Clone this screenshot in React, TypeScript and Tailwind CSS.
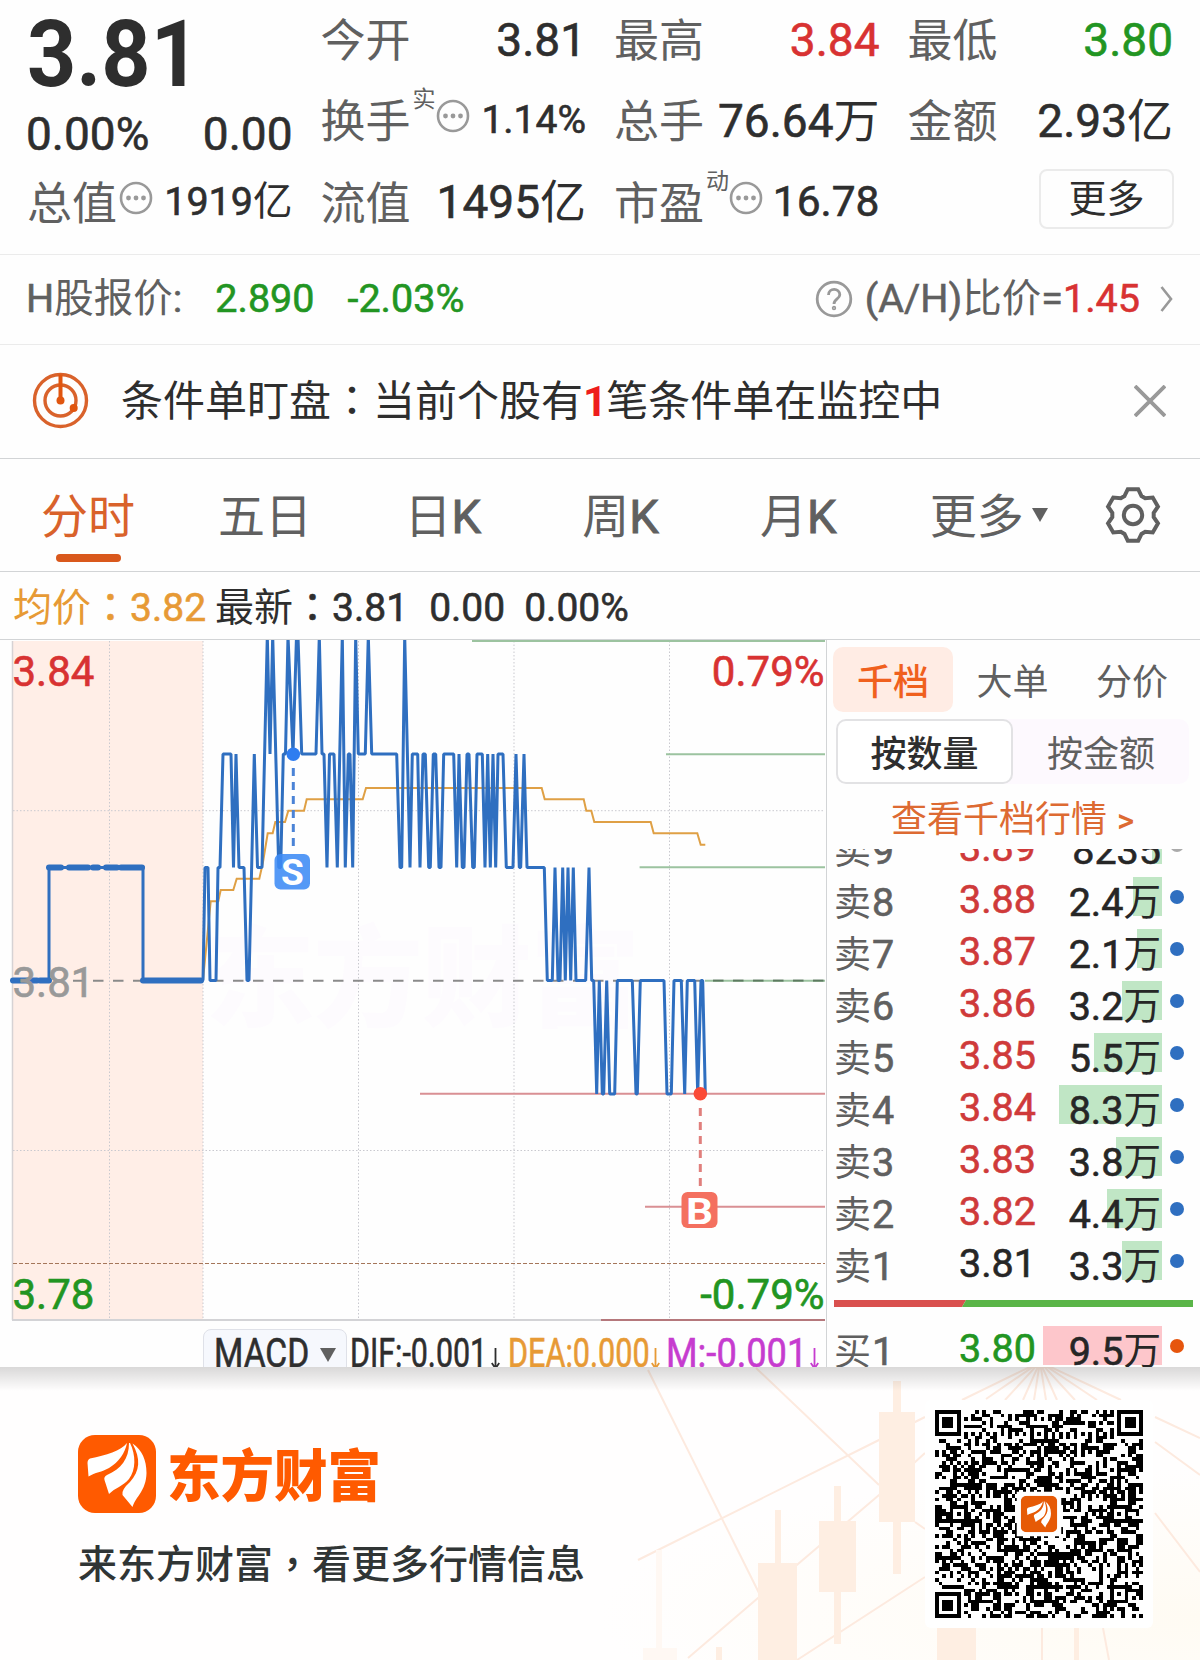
import type { ReactNode } from 'react';

const BLUE = '#2f6fc0';

// price level -> y inside the chart (chart top is 0)
const LEVEL = { T: -4, A: 114, B: 227.5, C: 340.5, D: 454 };

// intraday ticks: x followed by level
const ticks =
  '203C 205B 208B 210C 216C 218B 220B 223A 231A 233.5B 236A 239B 244B 247C 249C 254.3A 257.5B 262B 267.3T 270A 272.7T 278.7B 280.7B 283.3A 285.5A 288T 293A 296.5T 298T 301.7A 316A 319.3T 322A 324A 327B 329.5A 334A 337.3B 342.3T 345.3B 348.3A 350A 352.7B 355.7T 358.3A 365.3A 368.3T 371.7A 396.7A 400B 401.7B 404.7T 410B 412.3A 417.7A 420B 423A 425.3A 428.7B 430.3B 433.3A 435.7A 439B 441B 443.7A 453.7A 456.7B 459A 462.3B 464B 467A 469A 472.7B 474.3B 477A 482.3A 485B 487.7A 490.3B 493A 495.7B 498A 503A 506.3B 513B 516A 519.3B 520.7B 524A 527B 544.3B 547.3C 552.3C 555B 558C 560C 562.7B 565.3C 568B 570.7C 573.3B 576C 585.7C 589B 591.7C 593.7C 596.7D 599.3C 602.3D 603.7D 606.7C 609.7D 614.7D 617.3C 632.3C 636D 637.3D 640.3C 664C 667D 671.3D 674C 681.3C 684.7D 687.3C 694.7C 697.7D 701C 702.7C 705.3D'.split(' ');

const tickPoints = ticks
  .map((t) => `${t.slice(0, -1)},${LEVEL[t.slice(-1) as keyof typeof LEVEL]}`)
  .join(' ');

const avgPoints =
  '203,340 210.7,261.3 218.3,261.3 220.7,250 233.3,250 236.7,238.7 259.3,238.7 263,222 267.7,193.3 272.7,193.3 275.3,182 285,182 288.3,170.7 304,170.7 306.7,159.3 362.7,159.3 366,148 541.7,148 544.7,159.3 583.7,159.3 586.3,170.7 591.3,170.7 594.3,182 650.7,182 653.7,193.3 697.3,193.3 700.7,204.7 705.3,204.7';

const gearPoints = [0, 60, 120, 180, 240, 300]
  .flatMap((deg) => {
    const a = (deg * Math.PI) / 180;
    return [[-8.5, -19], [-5.2, -25.8], [5.2, -25.8], [8.5, -19]].map(
      ([x, y]) => `${(x * Math.cos(a) - y * Math.sin(a)).toFixed(2)},${(x * Math.sin(a) + y * Math.cos(a)).toFixed(2)}`,
    );
  })
  .join(' ');

const orders = [
  { label: '卖9', price: '3.89', qty: '8235', bar: 10, dot: 'bg-[#aaaaaa]' },
  { label: '卖8', price: '3.88', qty: '2.4万', bar: 29 },
  { label: '卖7', price: '3.87', qty: '2.1万', bar: 25 },
  { label: '卖6', price: '3.86', qty: '3.2万', bar: 40 },
  { label: '卖5', price: '3.85', qty: '5.5万', bar: 68 },
  { label: '卖4', price: '3.84', qty: '8.3万', bar: 103 },
  { label: '卖3', price: '3.83', qty: '3.8万', bar: 46 },
  { label: '卖2', price: '3.82', qty: '4.4万', bar: 55 },
  { label: '卖1', price: '3.81', qty: '3.3万', bar: 40, color: 'text-[#262626]' },
];

// QR version 10: 57 modules a side
const SIZE = 57;
const isDark = (x: number, y: number, noise: number) => {
  const finders = [[3, 3], [SIZE - 4, 3], [3, SIZE - 4]];
  for (const [cx, cy] of finders) {
    const d = Math.max(Math.abs(x - cx), Math.abs(y - cy));
    if (d <= 4) return d === 3 || d <= 1;
  }
  const aligns = [[6, 28], [28, 6], [28, 50], [50, 28], [50, 50]];
  for (const [cx, cy] of aligns) {
    const d = Math.max(Math.abs(x - cx), Math.abs(y - cy));
    if (d <= 2) return d !== 1;
  }
  if (x === 6 || y === 6) return (x + y) % 2 === 0;
  return noise > 0.5;
};

let seed = 20231;
let qrPath = '';
for (let y = 0; y < SIZE; y++) {
  for (let x = 0; x < SIZE; x++) {
    seed = (seed * 1103515245 + 12345) % 2147483648;
    if (isDark(x, y, seed / 2147483648)) qrPath += `M${x} ${y}h1v1h-1z`;
  }
}

// latin and digits carry the thin outline, Chinese runs do not
const Mixed = ({ children }: { children: string }) => (
  <>
    {children.split(/([\u4e00-\u9fff]+|：|，)/).filter(Boolean).map((part, i) => {
      if (part === '：' || part === '，') return <span key={i} className="font-['Noto_Sans_CJK_TC']">{part}</span>;
      return /[\u4e00-\u9fff]/.test(part) ? <span key={i} className="[-webkit-text-stroke:0]">{part}</span> : part;
    })}
  </>
);

const Feathers = () => (
  <g fill="#fff">
    <path d="M49 8C43 16 28 20 12 23.5Q9.5 24.5 9.5 28L10.5 41.5C17 37.5 24 37 31 33C41 27 47 18 49 8Z" />
    <path d="M51 8C51 24 43 34 29 40Q25.5 42 26.5 45L31 59C37 53 45 51 51 44C58 35 58 20 52 8Z" />
    <path d="M54.5 8.5C63 24 62 36 52 47Q43 55 44.5 60L54.5 72C58 61 68 56 68.5 38C68.5 25 64 15 54.5 8.5Z" />
  </g>
);

const Dots = () => (
  <svg className="w-[34px] h-[34px] shrink-0" viewBox="-17 -17 34 34" fill="#999">
    <circle r="15" fill="none" stroke="#999" strokeWidth="2.6" />
    <circle cx="-7.5" r="2.4" />
    <circle r="2.4" />
    <circle cx="7.5" r="2.4" />
  </svg>
);

type StatProps = { label: string; children: string; sup?: string; dots?: boolean; value?: string };

const Stat = ({ label, children, sup, dots, value = 'text-[46px] text-[#2e2e2e]' }: StatProps) => (
  <div className="flex items-center justify-between h-full whitespace-nowrap">
    <div className="flex items-center [-webkit-text-stroke:0]">
      <span className="text-[45px] text-[#606060] translate-y-[2px]">{label}</span>
      {sup && <span className="text-[23px] text-[#606060] ml-[2px] -mt-[42px]">{sup}</span>}
      {dots && <div className={sup ? '-mt-[9px]' : '-mt-[9px] ml-[2px]'}><Dots /></div>}
    </div>
    <span className={value}><Mixed>{children}</Mixed></span>
  </div>
);

const Row = ({ h, children }: { h: string; children: ReactNode }) => <div className={h}>{children}</div>;

const Quote = () => (
  <section className="grid grid-cols-4 gap-x-[28px] h-[255px] px-[27px] border-b border-[#ebebeb]">
    <div>
      <div className="h-[105px] flex items-center pt-[3px]">
        <span className="text-[93px] font-bold text-[#2e2e2e] origin-left scale-x-[0.925] [-webkit-text-stroke:0]">3.81</span>
      </div>
      <div className="h-[57px] flex items-center justify-between text-[46px] text-[#2e2e2e]">
        <span className="-ml-[1px]">0.00%</span>
        <span>0.00</span>
      </div>
      <Row h="h-[81px]">
        <Stat label="总值" dots value="text-[39.5px] text-[#2e2e2e] -mt-[2px]">1919亿</Stat>
      </Row>
    </div>
    <div>
      <Row h="h-[79px]"><Stat label="今开">3.81</Stat></Row>
      <Row h="h-[83px]">
        <Stat label="换手" sup="实" dots value="text-[39px] text-[#2e2e2e]">1.14%</Stat>
      </Row>
      <Row h="h-[80px]"><Stat label="流值">1495亿</Stat></Row>
    </div>
    <div>
      <Row h="h-[79px]"><Stat label="最高" value="text-[46px] text-[#d83232]">3.84</Stat></Row>
      <Row h="h-[83px]"><Stat label="总手">76.64万</Stat></Row>
      <Row h="h-[80px]">
        <Stat label="市盈" sup="动" dots value="text-[42.5px] text-[#2e2e2e]">16.78</Stat>
      </Row>
    </div>
    <div>
      <Row h="h-[79px]"><Stat label="最低" value="text-[46px] text-[#229522]">3.80</Stat></Row>
      <Row h="h-[83px]"><Stat label="金额">2.93亿</Stat></Row>
      <div className="h-[80px] flex items-center justify-end">
        <button type="button" className="w-[135px] h-[60px] -mt-[6px] -mr-[1px] rounded-[8px] border-2 border-[#ebebeb] text-[38px] text-[#2e2e2e] [-webkit-text-stroke:0]">
          更多
        </button>
      </div>
    </div>
  </section>
);

const HShare = () => (
  <section className="flex items-center h-[90px] pl-[26px] pr-[27px] pb-[1px] border-b border-[#ebebeb] text-[39.5px] text-[#606060] whitespace-nowrap">
    <span><Mixed>H股报价:</Mixed></span>
    <span className="text-[#229522] ml-[33px]">2.890</span>
    <span className="text-[#229522] ml-[33px]">-2.03%</span>
    <svg className="w-[38px] h-[38px] ml-auto mr-[12px]" viewBox="-19 -19 38 38" fill="none" stroke="#999" strokeWidth="2.8">
      <circle r="16.8" />
      <path d="M-5.5 -4C-5.5 -11.5 5.8 -11.5 5.8 -4.2C5.8 0 0 0 0 5" />
      <circle cy="9" r="0.8" />
    </svg>
    <span><Mixed>(A/H)比价=</Mixed></span>
    <span className="text-[#d83232]">1.45</span>
    <svg className="w-[13px] h-[26px] ml-[20px]" viewBox="0 0 13 26" fill="none" stroke="#999" strokeWidth="2.6">
      <path d="M1.5 1L11 13L1.5 25" />
    </svg>
  </section>
);

const Notice = () => (
  <section className="flex items-center h-[114px] pl-[32px] pr-[34px] pb-[2px] border-b border-[#d2d4d6] text-[42px] text-[#2e2e2e] whitespace-nowrap">
    <svg className="w-[57px] h-[57px] mr-[32px]" viewBox="-28.5 -28.5 57 57" fill="none" stroke="#d9622b" strokeWidth="3.4">
      <circle r="26" />
      <circle r="15.5" />
      <path d="M0 -26V0" stroke="#e0550f" strokeWidth="4" />
      <circle r="4" fill="#e0550f" stroke="none" />
      <circle cx="13.2" cy="7.5" r="4" fill="#e0550f" stroke="none" />
    </svg>
    <span className="-translate-y-[1.5px] [-webkit-text-stroke:0]">
      <Mixed>条件单盯盘：当前个股有</Mixed>
      <b className="text-[#ee1c1c] tracking-[-1px]">1</b>
      <Mixed>笔条件单在监控中</Mixed>
    </span>
    <svg className="w-[32px] h-[32px] ml-auto" viewBox="0 0 32 32" stroke="#999" strokeWidth="3.8">
      <path d="M1 1L31 31M31 1L1 31" />
    </svg>
  </section>
);

const Tabs = () => (
  <nav className="flex items-center h-[113px] border-b border-[#d2d4d6] text-[47px] text-[#606060]">
    <div className="relative w-[176px] h-full flex items-center justify-center text-[#d9622b] [-webkit-text-stroke:0]">
      <span className="translate-y-[1px]">分时</span>
      <span className="absolute bottom-[9px] left-[56px] w-[65px] h-[8px] rounded-full bg-[#d9581c]" />
    </div>
    {['五日', '日K', '周K', '月K'].map((t) => (
      <div key={t} className="w-[177.8px] text-center translate-y-[1px] [-webkit-text-stroke:1px]"><Mixed>{t}</Mixed></div>
    ))}
    <div className="flex items-center w-[205px] justify-center gap-[8px] -ml-[1px] [-webkit-text-stroke:0]">
      <span className="translate-y-[1px]">更多</span>
      <svg className="w-[16px] h-[14px]" viewBox="0 0 16 14" fill="#606060"><path d="M0 0H16L8 14Z" /></svg>
    </div>
    <svg className="w-[60px] h-[60px] ml-[12px]" viewBox="-30 -30 60 60" fill="none" stroke="#606060" strokeWidth="4">
      <polygon points={gearPoints} />
      <circle r="9.2" />
    </svg>
  </nav>
);

const Summary = () => (
  <div className="flex items-baseline h-[68px] pl-[13px] pt-[13px] border-b border-[#d2d4d6] text-[39px] text-[#2e2e2e] whitespace-nowrap">
    <span className="text-[#e79a35]"><Mixed>均价：3.82</Mixed></span>
    <span className="ml-[9px]"><Mixed>最新：3.81</Mixed></span>
    <span className="ml-[21px]">0.00</span>
    <span className="ml-[19px]">0.00%</span>
  </div>
);

const Chart = () => (
  <svg className="block w-[826px] h-[682px]" viewBox="0 0 826 682" fill="none" fontFamily="Roboto, sans-serif">
    <rect x="13" y="1" width="190" height="679" fill="#ffeee7" />
    <text x="205" y="378" fontSize="110" fontWeight="900" fill="#fdfbfe" textLength="435" fontFamily="Noto Sans CJK SC">东方财富</text>
    <path d="M109.5 1V680M203 1V680M358.5 1V680M514 1V680M669.5 1V680M13 170.7H825M13 510.5H825" stroke="#c9c9cf" strokeWidth="1" strokeDasharray="1.5 2" />
    <path d="M12.5 1V680" stroke="#d6d2d4" strokeWidth="1.5" />
    <path d="M12 680H825" stroke="#d3d3d6" strokeWidth="2" />
    <path d="M13 623.5H825" stroke="#a5765a" strokeWidth="1.2" strokeDasharray="4 2" />
    <path d="M73 340.7H825" stroke="#8a8a8a" strokeWidth="2" strokeDasharray="10.5 9.5" />
    <path d="M472 1H825M666 114.3H825M639.6 227.3H825M705 340.7H825" stroke="#9cc3a0" strokeWidth="2" />
    <path d="M713 340.7H825" stroke="#5d7a60" strokeWidth="1.8" strokeDasharray="10.5 9.5" />
    <path d="M420 453.7H825M645 566.8H825" stroke="#d99094" strokeWidth="2" />
    <path d="M601 680H825" stroke="#b5787c" strokeWidth="2" />
    <polyline points={avgPoints} stroke="#dfa045" strokeWidth="2" />
    <path d="M12 340.5H49V227.5H143V340.5H203" stroke={BLUE} strokeWidth="3" />
    <path d="M13 340.5H37M40 340.5H49M49 227.5H61M69 227.5H88M93 227.5H98M106 227.5H117M121 227.5H142M143 340.5H201" stroke={BLUE} strokeWidth="6" strokeLinecap="round" />
    <polyline points={tickPoints} stroke={BLUE} strokeWidth="3" strokeLinejoin="bevel" />
    <path d="M293.3 128V208" stroke="#4b83d6" strokeWidth="3" strokeDasharray="8 6" />
    <circle cx="293.3" cy="114.3" r="6.8" fill="#2f7df0" />
    <rect x="274.5" y="214" width="35.5" height="35.5" rx="6" fill="#3d8bf5" fillOpacity="0.88" />
    <text x="292.3" y="244.5" fontSize="37" fontWeight="700" fill="#fff" textAnchor="middle">S</text>
    <path d="M700.3 468V546" stroke="#e07f7c" strokeWidth="3" strokeDasharray="8 6" />
    <circle cx="700.3" cy="453.7" r="6.8" fill="#fb4a36" />
    <rect x="681.5" y="552" width="36" height="36" rx="6" fill="#f4705f" />
    <text x="699.5" y="583.5" fontSize="37" fontWeight="700" fill="#fff" textAnchor="middle" textLength="27" lengthAdjust="spacingAndGlyphs">B</text>
    <g fontSize="42" className="[-webkit-text-stroke:0]" strokeWidth="0.6">
      <text x="12.500" y="46" fill="#d83232" stroke="#d83232">3.84</text>
      <text x="12.500" y="357" fill="#999" stroke="#999">3.81</text>
      <text x="12.500" y="669" fill="#229522" stroke="#229522">3.78</text>
      <text x="824.500" y="46" fill="#d83232" stroke="#d83232" textAnchor="end">0.79%</text>
      <text x="824.500" y="669" fill="#229522" stroke="#229522" textAnchor="end">-0.79%</text>
    </g>
  </svg>
);

const DownArrow = () => (
  <svg className="w-[9px] h-[22px] shrink-0 mt-[10px]" viewBox="0 0 9 22" fill="none" stroke="currentColor" strokeWidth="1.8">
    <path d="M4.5 0V20M0.8 15L4.5 20.5L8.2 15" />
  </svg>
);

const Macd = () => (
  <div className="flex h-[45px] pl-[203px] pt-[7px] text-[40px] text-[#2e2e2e] overflow-hidden whitespace-nowrap">
    <div className="flex items-center w-[144px] h-[60px] shrink-0 rounded-[8px] border border-[#dfe1e8] bg-[#f6f8fd] pl-[10px] pb-[10px]">
      <span className="w-[105px] origin-left scale-x-[0.84]">MACD</span>
      <svg className="w-[16px] h-[14px] mt-[2px] ml-[1px]" viewBox="0 0 16 14" fill="#606060"><path d="M0 0H16L8 14Z" /></svg>
    </div>
    <div className="flex h-[49px] items-center ml-[3px] w-[158px]">
      <span className="w-[141px] origin-left scale-x-[0.76]">DIF:-0.001</span>
      <DownArrow />
    </div>
    <div className="flex h-[49px] items-center text-[#e79a35] w-[158px]">
      <span className="w-[143px] origin-left scale-x-[0.765]">DEA:0.000</span>
      <DownArrow />
    </div>
    <div className="flex h-[49px] items-center text-[#c63ccf]">
      <span className="w-[144px] origin-left scale-x-[0.905]">M:-0.001</span>
      <DownArrow />
    </div>
  </div>
);

type OrderProps = { label: string; price: string; qty: string; bar: number; color?: string; fill?: string; dot?: string };

const Order = ({ label, price, qty, bar, color = 'text-[#cf3a3a]', fill = 'bg-[#c0e6c5]', dot = 'bg-[#2f6fc0]' }: OrderProps) => (
  <div className="flex h-[52px] pl-[7px] pt-[6px] text-[39.5px]">
    <div className="w-[125px] h-[42px] flex items-center text-[#606060] translate-y-[4.5px]">
      <span className="text-[37px] [-webkit-text-stroke:0]">{label[0]}</span>
      <span className="ml-[1px]">{label[1]}</span>
    </div>
    <div className={`w-[84px] h-[38px] flex items-center translate-y-[4px] ${color}`}>{price}</div>
    <div className="relative w-[119px] h-[39px]">
      <div className={`absolute right-0 top-0 h-full ${fill}`} style={{ width: bar }} />
      <div className="relative h-[43px] flex items-center justify-end pr-[1px] text-[#262626] translate-y-[4px]">
        <span>{qty.replace('万', '')}</span>
        {qty.endsWith('万') && <span className="text-[37.5px] [-webkit-text-stroke:0]">万</span>}
      </div>
    </div>
    <span className={`w-[14px] h-[14px] rounded-full mt-[13px] ml-[8px] ${dot}`} />
  </div>
);

const Depth = () => (
  <aside className="w-[374px] h-[727px] border-l border-[#d2d4d6] overflow-hidden">
    <div className="flex pl-[6px] pt-[7px] text-[36px] text-[#606060] [-webkit-text-stroke:0]">
      <div className="w-[120px] h-[65px] pt-[6px] rounded-[10px] bg-[#ffece4] flex items-center justify-center text-[#f0601d] font-medium">千档</div>
      <div className="w-[119px] h-[65px] pt-[6px] flex items-center justify-center">大单</div>
      <div className="w-[120px] h-[65px] pt-[6px] flex items-center justify-center">分价</div>
    </div>
    <div className="flex ml-[9px] mt-[7px] w-[353px] h-[65px] rounded-[10px] bg-[#fdf9fe] text-[36px] text-[#606060] [-webkit-text-stroke:0]">
      <div className="w-[177px] pt-[6px] rounded-[10px] border-2 border-[#e2e2e4] bg-white flex items-center justify-center text-[#2e2e2e] font-medium">按数量</div>
      <div className="flex-1 pt-[6px] flex items-center justify-center">按金额</div>
    </div>
    <div className="h-[65px] flex items-center pl-[64px] pt-[7px] text-[36px] text-[#dd6a32] [-webkit-text-stroke:0]">
      查看千档行情<span className="ml-[10px] text-[33px] font-medium">&gt;</span>
    </div>
    <div className="h-[438px] overflow-hidden">
      <div className="-mt-[30px]">
        {orders.map((o) => <Order key={o.label} {...o} />)}
      </div>
    </div>
    <svg className="block w-[359px] h-[7px] ml-[7px] mt-[13px] mb-[13px]" viewBox="0 0 359 7">
      <path d="M0 0H132L128 7H0Z" fill="#d9504e" />
      <path d="M132 0H359V7H128Z" fill="#5ab548" />
    </svg>
    <Order label="买1" price="3.80" qty="9.5万" bar={119} color="text-[#229522]" fill="bg-[#fdc6cb]" dot="bg-[#e6550d]" />
  </aside>
);

// faint candlesticks and rays behind the footer
const Backdrop = () => (
  <svg className="absolute inset-0 w-full h-full" viewBox="0 0 1200 293">
    <defs>
      <radialGradient id="glow" cx="1" cy="0.85" r="0.5">
        <stop offset="0" stopColor="#fffbf3" />
        <stop offset="1" stopColor="#fffefe" />
      </radialGradient>
    </defs>
    <rect width="1200" height="293" fill="url(#glow)" />
    <g fill="none" stroke="#fdeadf" strokeWidth="2">
      <path d="M648 3L759 226M756 1L879 118M638 193L879 73L925 50M688 291L758 231L818 180L879 128L925 86M797 293L925 210M915 155L925 162" />
      <path d="M1155 50L1200 71M1155 75L1200 108M1155 146L1200 205M1042 261V293M1103 261L1109 293" />
      <path d="M1040 -5L962 33M1040 -5L986 32M1040 -5L1005 33M1040 -5L1023 33M1040 -5L1034 33M1040 -5L1046 33M1040 -5L1057 33M1040 -5L1075 33M1040 -5L1097 33M1040 -5L1121 33" />
    </g>
    <g fill="#feeee2">
      <path d="M893 14h8v31h14v110h-14v52h-8v-52h-14v-110h14z" />
      <path d="M834 119h7v35h15v71h-15v52h-7v-52h-15v-71h15z" />
      <path d="M775 143h6v53h16v97h-39v-97h17z" />
      <path d="M937 261h39v32h-39zM1074 261h5v32h-5zM716 280h6v13h-6z" />
    </g>
    <path d="M656 183h6v98h15v12h-34v-12h13z" fill="#fff8f3" />
  </svg>
);

const Footer = () => (
  <footer className="relative flex h-[293px] justify-between pl-[78px] pr-[47px] overflow-hidden [-webkit-text-stroke:0]">
    <Backdrop />
    <div className="absolute inset-x-0 top-0 h-[24px] bg-linear-to-b from-black/15 to-transparent" />
    <div className="relative pt-[68px]">
      <div className="flex items-center gap-[12px]">
        <svg className="w-[78px] h-[78px]" viewBox="0 0 78 78">
          <rect width="78" height="78" rx="17" fill="#ff5a00" />
          <Feathers />
        </svg>
        <span className="text-[53.5px] font-black text-[#ff5a00] scale-y-[1.04] translate-y-[3px] -ml-[1px]">东方财富</span>
      </div>
      <p className="mt-[29px] text-[39px] font-medium text-[#303535] whitespace-nowrap">
        来东方财富<span className="font-['Noto_Sans_CJK_TC']">，</span>看更多行情信息
      </p>
    </div>
    <div className="relative w-[228px] h-[228px] mt-[33px] rounded-[6px] bg-white flex items-center justify-center">
      <svg className="w-[208px] h-[208px]" viewBox="0 0 57 57">
        <path d={qrPath} shapeRendering="crispEdges" />
        <rect x="22.4" y="22.4" width="12.2" height="12.2" fill="#fff" />
        <svg x="23.5" y="23.5" width="10" height="10" viewBox="0 0 78 78">
          <rect width="78" height="78" rx="12" fill="#e65a06" />
          <g transform="translate(5 5) scale(0.87)"><Feathers /></g>
        </svg>
      </svg>
    </div>
  </footer>
);

const App = () => (
  <div className="w-[1200px] h-[1660px] overflow-hidden bg-[#fefefe] leading-none font-[Roboto,'Noto_Sans_CJK_SC',sans-serif] [-webkit-text-stroke:0.6px]">
    <Quote />
    <HShare />
    <Notice />
    <Tabs />
    <Summary />
    <div className="flex h-[727px]">
      <div className="w-[826px]">
        <Chart />
        <Macd />
      </div>
      <Depth />
    </div>
    <Footer />
  </div>
);

export default App;
